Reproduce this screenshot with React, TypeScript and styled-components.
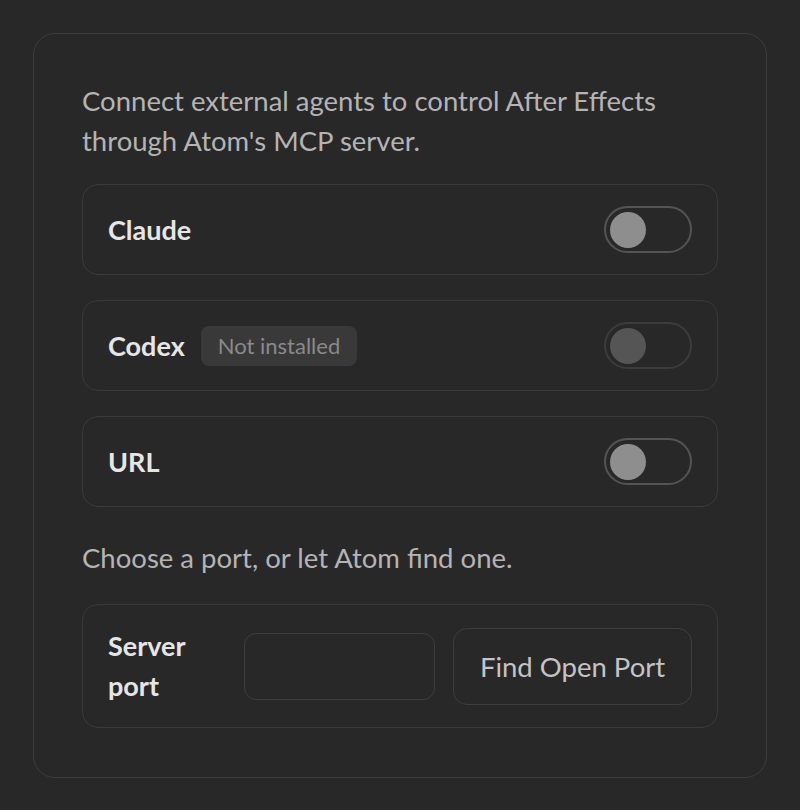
import React from "react";
import styled, { createGlobalStyle } from "styled-components";

const Global = createGlobalStyle`
  html, body { margin: 0; padding: 0; background: #282828; }
  body { font-family: Lato, "Noto Sans", sans-serif; -webkit-font-smoothing: antialiased; }
  * { box-sizing: border-box; }
`;

const Page = styled.div`
  width: 800px;
  height: 810px;
  padding: 33px;
  background: #282828;
`;

const Card = styled.section`
  border: 1.5px solid #3c3c3c;
  border-radius: 22px;
  padding: 47px 48px 49px;
  display: flex;
  flex-direction: column;
`;

const Description = styled.p<{ $mt?: number; $mb?: number }>`
  margin: ${(p) => p.$mt ?? 0}px 0 ${(p) => p.$mb ?? 0}px;
  font-size: 27.5px;
  line-height: 40px;
  color: #b4b4b4;
`;

const Row = styled.div<{ $tall?: boolean }>`
  display: flex;
  align-items: center;
  height: ${(p) => (p.$tall ? 124 : 91)}px;
  padding: 0 25px;
  border: 1.5px solid #3a3a3a;
  border-radius: 16px;
  & + & { margin-top: 25px; }
`;

const Label = styled.span<{ $w?: number }>`
  font-size: 27px;
  font-weight: 700;
  color: #e6e6e6;
  line-height: 40px;
  ${(p) => (p.$w ? `width: ${p.$w}px; flex: 0 0 ${p.$w}px;` : "")}
`;

const Badge = styled.span`
  margin-left: 16px;
  height: 40px;
  padding: 0 17px;
  display: inline-flex;
  align-items: center;
  border-radius: 8px;
  background: #393939;
  color: #8a8a8a;
  font-size: 22px;
`;

const Toggle = styled.span<{ $disabled?: boolean }>`
  margin-left: auto;
  width: 88px;
  height: 47px;
  border-radius: 24px;
  border: 2px solid ${(p) => (p.$disabled ? "#3c3c3c" : "#545454")};
  display: flex;
  align-items: center;
  padding-left: 4px;
  &::before {
    content: "";
    width: 36px;
    height: 36px;
    border-radius: 50%;
    background: ${(p) => (p.$disabled ? "#555555" : "#8e8e8e")};
  }
`;

const Input = styled.input`
  width: 191px;
  height: 67px;
  margin-left: 18px;
  border: 1.5px solid #3e3e3e;
  border-radius: 12px;
  background: transparent;
  outline: none;
`;

const Button = styled.button`
  margin-left: auto;
  width: 239px;
  height: 77px;
  border: 1.5px solid #3e3e3e;
  border-radius: 14px;
  background: transparent;
  color: #c4c4c4;
  font-family: inherit;
  font-size: 27.5px;
`;

export default function App() {
  return (
    <Page>
      <Global />
      <Card>
        <Description $mb={23}>
          Connect external agents to control After Effects through Atom's MCP server.
        </Description>
        <Row>
          <Label>Claude</Label>
          <Toggle />
        </Row>
        <Row>
          <Label>Codex</Label>
          <Badge>Not installed</Badge>
          <Toggle $disabled />
        </Row>
        <Row>
          <Label>URL</Label>
          <Toggle />
        </Row>
        <Description $mt={31} $mb={26}>
          Choose a port, or let Atom find one.
        </Description>
        <Row $tall>
          <Label $w={118}>Server port</Label>
          <Input />
          <Button>Find Open Port</Button>
        </Row>
      </Card>
    </Page>
  );
}
